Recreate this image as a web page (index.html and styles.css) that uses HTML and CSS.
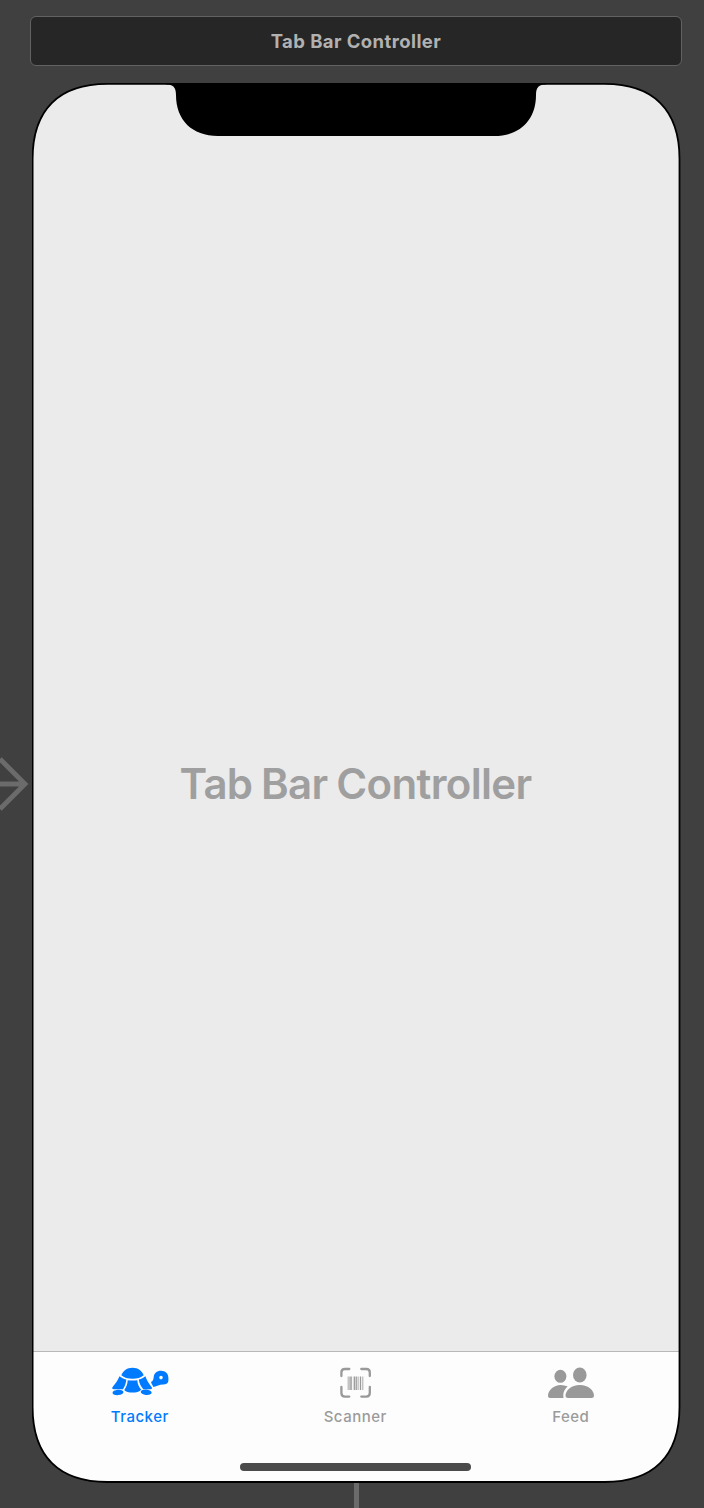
FILE: index.html
```html
<!DOCTYPE html>
<html lang="en">
<head>
<meta charset="utf-8">
<title>Tab Bar Controller</title>
<link rel="stylesheet" href="styles.css">
</head>
<body>
<main class="canvas">
  <header class="scene-title"><span class="scene-name">Tab Bar Controller</span></header>
  <svg class="entry-arrow" width="30" height="54" viewBox="0 0 30 54"><path d="M-2 27H25M0 2L25 27L0 52" fill="none" stroke="#6b6b6b" stroke-width="4.8"/></svg>
  <section class="phone">
    <svg class="device" width="649" height="1401" viewBox="0 0 649 1401">
      <defs><clipPath id="body"><path id="shell" d="M75.500 .9H572.500C621.500 .9 647.500 26.900 647.500 75.900V1324C647.500 1373 621.500 1399 572.500 1399H75.500C26.600 1399 .6 1373 .6 1324V75.900C.6 26.900 26.600 .9 75.500 .9Z"/></clipPath></defs>
      <g clip-path="url(#body)">
        <path fill="#ebebeb" d="M0 0H649V1401H0Z"/>
        <path fill="#fdfdfd" d="M0 1269H649V1401H0Z"/>
        <path fill="#b8b8b8" d="M0 1268H649V1269H0Z"/>
      </g>
      <use href="#shell" fill="none" stroke="#000" stroke-width="1.800"/>
      <path d="M134 0V1.500C141 1.500 144 4 144 12C144 37 160 53 186 53H462C488 53 504 37 504 12C504 4 507 1.500 514 1.500V0Z"/>
    </svg>
    <div class="screen"><h1 class="placeholder">Tab Bar Controller</h1></div>
    <nav class="tabs">
      <a class="tab active">
        <svg class="icon" width="60" height="34" viewBox="0 0 60 34" fill="currentColor">
          <path d="M11.300 10.200C13.500 5.500 17 2.800 22.500 2.800S31.500 5.500 33.700 10.200C31 12.700 27 13.700 22.500 13.700S14 12.700 11.300 10.200Z"/>
          <path d="M9.500 11.300C11.500 13 13.500 13.800 16.300 14.600C16 18 15 21 13 24.200H4C2 24.200 1.700 23 3 21.400C6.300 18 7.700 15 9.500 11.300Z"/>
          <path d="M17.700 15.200Q22.500 16 27.300 15.200C27.500 19 29 22 31.300 24.700C28 28.500 17 28.500 14.300 24.900C16.500 21.700 17.600 18.700 17.700 15.200Z"/>
          <path d="M28.800 14.600C31.500 13.800 33.500 13 35.400 11.300C36.800 15 38.200 18 41.500 22C42.500 23.200 42 24.200 40.500 24.200H33.300C30.900 21.500 29.200 18.500 28.800 14.600Z"/>
          <path fill-rule="evenodd" d="M41 17C42.800 16 43.500 14.500 43.700 12.200C44 8.200 46.800 5.700 51 5.700C55.500 5.700 58.400 8.600 58.400 13V15.500C58.400 18 56.400 19.400 53 19.400C49 19.400 47.200 21 43.500 21.900Q41.500 19.400 41 17ZM51 10.800A1.800 1.800 0 1 0 51 14.400A1.800 1.800 0 1 0 51 10.800Z"/>
          <ellipse cx="8" cy="27.400" rx="5.500" ry="2.700" transform="rotate(-5 8 27.400)"/>
          <ellipse cx="36.200" cy="27.300" rx="5.500" ry="2.700" transform="rotate(5 36.200 27.300)"/>
        </svg>
        <span class="label">Tracker</span>
      </a>
      <a class="tab">
        <svg class="icon" width="34" height="34" viewBox="-0.8 0 34 34">
          <path d="M2.600 11V7.500Q2.600 4 6.100 4H10.500M22.500 4H27.500Q31 4 31 7.500V11M31 22V28Q31 31.600 27.500 31.600H22.500M10.500 31.600H6.100Q2.600 31.600 2.600 28V22" fill="none" stroke="#999" stroke-width="2.300" stroke-linecap="round"/>
          <path d="M9.400 11.500V25M12.800 11.500V25M19.300 11.500V25M24 11.500V25" stroke="#a9a9a9" stroke-width="1"/>
          <path d="M11.300 11.500V25M15.500 11.500V25M17.400 11.500V25M21.700 11.500V25" stroke="#999" stroke-width="1.300"/>
        </svg>
        <span class="label">Scanner</span>
      </a>
      <a class="tab">
        <svg class="icon" width="48" height="34" viewBox="0 0 48 34" fill="#999">
          <ellipse cx="13.400" cy="11.300" rx="6" ry="6.500"/><ellipse cx="32.800" cy="10" rx="6.800" ry="7.400"/>
          <path d="M20.700 21.500C17.500 24 15.600 28 16.600 33H3Q1 33 1 31C1 25 7 20 13.500 20Q17.700 20 20.700 21.500Z"/>
          <path d="M21 33Q18.500 33 18.500 30.800C18.500 25.500 24 20 32.800 20S47 25.500 47 30.800Q47 33 44.500 33Z"/>
        </svg>
        <span class="label">Feed</span>
      </a>
    </nav>
    <div class="home"></div>
  </section>
  <div class="connector"></div>
</main>
</body>
</html>
```
FILE: styles.css
```css
* { box-sizing: border-box; }
body { margin: 0; background: #404040; font-family: Inter, Roboto, sans-serif; }
.canvas { position: relative; width: 704px; height: 1508px; padding-top: 16px; overflow: hidden; display: flex; flex-direction: column; }
.scene-title { margin-left: 30px; width: 652px; height: 50px; flex: none; border: 1.500px solid #626262; border-radius: 6px; background: #262626; display: flex; align-items: center; justify-content: center; }
.scene-name { font-size: 18.500px; font-weight: 700; line-height: 24px; letter-spacing: 0.42px; color: #b1b1b1; white-space: nowrap; }
.entry-arrow { position: absolute; left: 0; top: 757px; }
.phone { position: relative; width: 649px; height: 1401px; margin: 17px 0 0 32px; flex: none; display: flex; flex-direction: column; }
.device { position: absolute; inset: 0; }
.screen { position: relative; height: 1268px; display: flex; justify-content: center; padding: 674px 2px 0 0; }
.placeholder { margin: 0; font-size: 42px; font-weight: 600; line-height: 54px; letter-spacing: -0.65px; word-spacing: -1.3px; color: #9f9f9f; white-space: nowrap; }
.tabs { position: relative; display: grid; grid-template-columns: repeat(3, 215.500px); padding: 14px 0 0; height: 112px; }
.tab { display: flex; flex-direction: column; align-items: center; color: #9b9b9b; }
.active { color: #007aff; }
.icon { display: block; overflow: visible; }
.label { margin-top: 8px; font-size: 15px; font-weight: 500; line-height: 20px; letter-spacing: 0.5px; white-space: nowrap; }
.home { position: relative; width: 231px; height: 8px; margin: 0 auto; left: -1px; border-radius: 4px; background: #4b4b4b; }
.connector { width: 5px; height: 25px; flex: none; margin: -1px 0 0 354px; background: #6b6b6b; }
```
